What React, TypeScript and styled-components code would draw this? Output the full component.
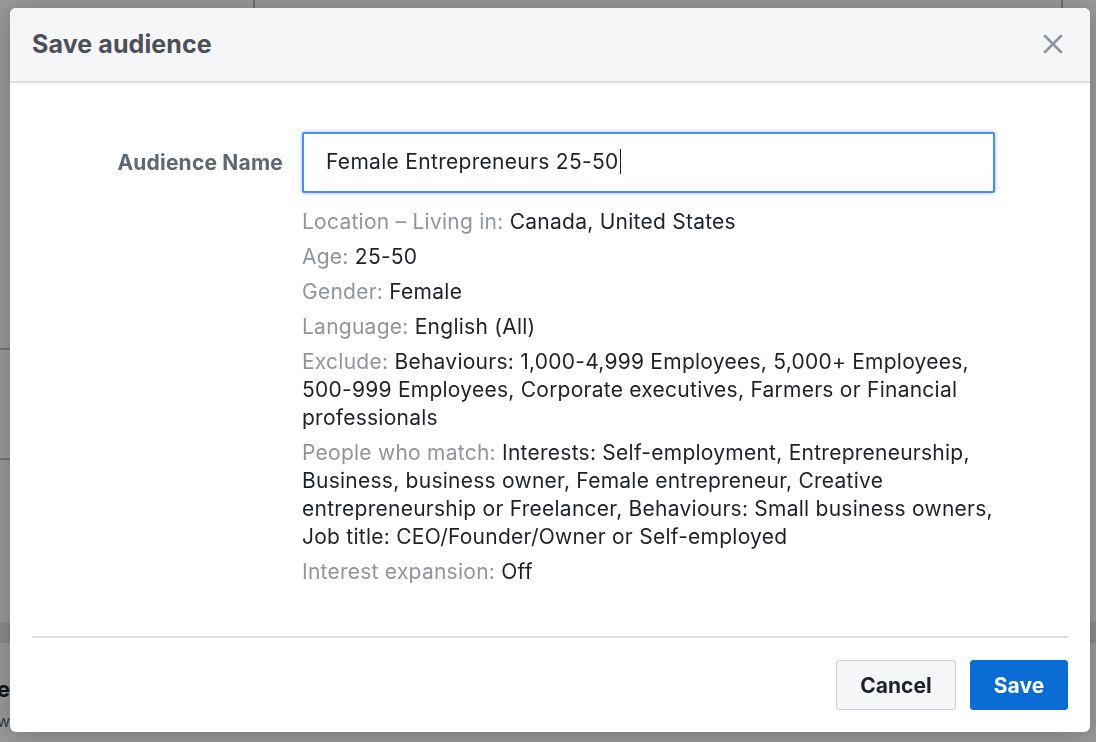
import React from "react";
import styled, { createGlobalStyle } from "styled-components";

const Global = createGlobalStyle`
  html, body { margin: 0; padding: 0; }
  body {
    width: 1096px;
    height: 742px;
    overflow: hidden;
    font-family: Inter, "Liberation Sans", Arial, sans-serif;
    background: #ffffff;
  }
  * { box-sizing: border-box; }
`;

/* ---------- page behind the dialog ---------- */
const Page = styled.div`
  width: 1096px;
  height: 742px;
  display: flex;
  flex-direction: column;
  background: #ffffff;
`;

const PageTop = styled.div`
  display: grid;
  grid-template-columns: 255px 808px 1fr;
  height: 622px;
`;

const Sidebar = styled.div`
  border-right: 2px solid #b4b8c8;
  display: flex;
  flex-direction: column;
`;

const SideRow = styled.div<{ $h: number }>`
  height: ${(p) => p.$h}px;
  border-bottom: 2px solid #c4c6c8;
`;

const MainCol = styled.div`
  border-right: 2px solid #b4b8c8;
`;

const Band = styled.div`
  height: 21px;
  background: #e6e7e9;
`;

const PageBottom = styled.div`
  padding: 34px 0 0 0;
  display: flex;
  flex-direction: column;
  gap: 10px;
`;

const PageHeading = styled.div`
  width: 10px;
  overflow: hidden;
  display: flex;
  justify-content: flex-end;
  white-space: nowrap;
  font-size: 22px;
  font-weight: 700;
  color: #1d2129;
  line-height: 24px;
`;

const PageSub = styled.div`
  width: 10px;
  overflow: hidden;
  display: flex;
  justify-content: flex-end;
  white-space: nowrap;
  font-size: 16px;
  color: #606770;
`;

/* ---------- dialog ---------- */
const Overlay = styled.div`
  position: fixed;
  inset: 0;
  background: rgba(0, 0, 0, 0.4);
  padding: 8px 6px 10px 10px;
  display: flex;
`;

const Modal = styled.div`
  width: 1080px;
  height: 724px;
  background: #ffffff;
  border-radius: 6px;
  overflow: hidden;
  display: flex;
  flex-direction: column;
  box-shadow: 0 2px 26px rgba(0, 0, 0, 0.25);
`;

const Header = styled.div`
  height: 75px;
  flex: none;
  background: #f5f6f7;
  border-bottom: 2px solid #dddfe2;
  display: flex;
  align-items: center;
  justify-content: space-between;
  padding: 0 26px 2px 22px;
`;

const Title = styled.h2`
  margin: 0;
  font-size: 25px;
  font-weight: 700;
  color: #4b4f56;
  letter-spacing: 0.1px;
`;

const CloseButton = styled.button`
  border: 0;
  background: transparent;
  padding: 0;
  width: 22px;
  height: 22px;
  display: flex;
  align-items: center;
  justify-content: center;
  cursor: pointer;
`;

const Body = styled.div`
  flex: 1;
  padding: 49px 95px 0 0;
  display: grid;
  grid-template-columns: 273px 1fr;
  column-gap: 19px;
  align-content: start;
`;

const Label = styled.div`
  height: 61px;
  display: flex;
  align-items: center;
  justify-content: flex-end;
  font-size: 21px;
  font-weight: 700;
  color: #606770;
  letter-spacing: 0.2px;
  padding-bottom: 1px;
`;

const TextField = styled.div`
  height: 61px;
  border: 2px solid #4a8bf5;
  border-radius: 2px;
  box-shadow: 0 0 4px rgba(74, 139, 245, 0.55);
  display: flex;
  align-items: center;
  padding: 0 0 2px 22px;
  font-size: 21px;
  color: #1d2129;
  letter-spacing: 0.3px;
`;

const Caret = styled.span`
  display: inline-block;
  width: 1.5px;
  height: 25px;
  background: #1d2129;
  margin-left: 1px;
`;

const Details = styled.div`
  grid-column: 2;
  padding-top: 15px;
  display: flex;
  flex-direction: column;
  gap: 7px;
`;

const Detail = styled.div`
  font-size: 21px;
  line-height: 28px;
  color: #1d2129;
  letter-spacing: 0.25px;
`;

const Key = styled.span`
  color: #90949c;
`;

const Footer = styled.div`
  flex: none;
  margin: 0 22px;
  border-top: 2px solid #dddfe2;
  padding: 22px 0 22px;
  display: flex;
  justify-content: flex-end;
  gap: 14px;
`;

const Button = styled.button<{ $primary?: boolean; $w: number }>`
  width: ${(p) => p.$w}px;
  height: 50px;
  border-radius: 3px;
  font-family: inherit;
  font-size: 21px;
  font-weight: 700;
  cursor: pointer;
  border: 1px solid ${(p) => (p.$primary ? "#0a6cd5" : "#ccd0d5")};
  background: ${(p) => (p.$primary ? "#0a6cd5" : "#f5f6f7")};
  color: ${(p) => (p.$primary ? "#ffffff" : "#1d2129")};
`;

const details: [string, string][] = [
  ["Location – Living in:", "Canada, United States"],
  ["Age:", "25-50"],
  ["Gender:", "Female"],
  ["Language:", "English (All)"],
  [
    "Exclude:",
    "Behaviours: 1,000-4,999 Employees, 5,000+ Employees, 500-999 Employees, Corporate executives, Farmers or Financial professionals",
  ],
  [
    "People who match:",
    "Interests: Self-employment, Entrepreneurship, Business, business owner, Female entrepreneur, Creative entrepreneurship or Freelancer, Behaviours: Small business owners, Job title: CEO/Founder/Owner or Self-employed",
  ],
  ["Interest expansion:", "Off"],
];

export default function App() {
  return (
    <>
      <Global />
      <Page>
        <PageTop>
          <Sidebar>
            <SideRow $h={350} />
            <SideRow $h={110} />
          </Sidebar>
          <MainCol />
          <div />
        </PageTop>
        <Band />
        <PageBottom>
          <PageHeading>Audience</PageHeading>
          <PageSub>View</PageSub>
        </PageBottom>
      </Page>
      <Overlay>
        <Modal role="dialog" aria-label="Save audience">
          <Header>
            <Title>Save audience</Title>
            <CloseButton aria-label="Close">
              <svg width="20" height="20" viewBox="0 0 20 20">
                <path
                  d="M2 2 L18 18 M18 2 L2 18"
                  stroke="#90949c"
                  strokeWidth="2.6"
                  strokeLinecap="round"
                />
              </svg>
            </CloseButton>
          </Header>
          <Body>
            <Label>Audience Name</Label>
            <TextField role="textbox">
              Female Entrepreneurs 25-50
              <Caret />
            </TextField>
            <Details>
              {details.map(([k, v]) => (
                <Detail key={k}>
                  <Key>{k}</Key> {v}
                </Detail>
              ))}
            </Details>
          </Body>
          <Footer>
            <Button $w={120}>Cancel</Button>
            <Button $w={98} $primary>
              Save
            </Button>
          </Footer>
        </Modal>
      </Overlay>
    </>
  );
}
